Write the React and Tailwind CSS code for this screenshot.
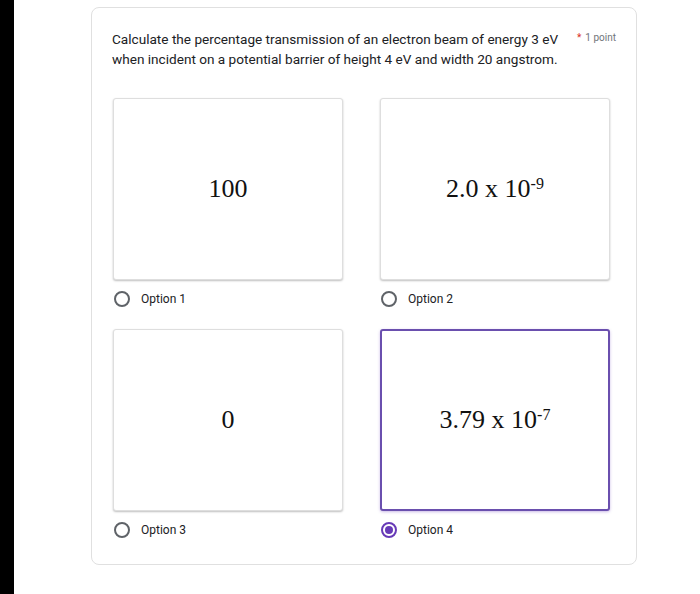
import React from "react";

function Radio({ checked }) {
  return checked ? (
    <span className="flex h-[16px] w-[16px] items-center justify-center rounded-full border-2 border-[#673ab7]">
      <span className="h-[8px] w-[8px] rounded-full bg-[#673ab7]" />
    </span>
  ) : (
    <span className="h-[16px] w-[16px] rounded-full border-2 border-[#5f6368]" />
  );
}

function Option({ label, checked, children }) {
  return (
    <div className="flex flex-col">
      <div
        className={
          checked
            ? "flex h-[182px] w-[230px] items-center justify-center rounded-[3px] border-2 border-[#6a4fae] bg-white shadow-[0_1px_3px_rgba(103,58,183,0.35)]"
            : "flex h-[182px] w-[230px] items-center justify-center rounded-[3px] border border-[#dedede] bg-white shadow-[0_1px_2px_rgba(0,0,0,0.25)]"
        }
      >
        <span className="font-['Liberation_Serif',serif] text-[26px] leading-none text-[#111]">
          {children}
        </span>
      </div>
      <div className="mt-[10px] flex items-center gap-[11px] pl-[1px]">
        <Radio checked={checked} />
        <span className="font-['Roboto',sans-serif] text-[12px] text-[#202124]">
          {label}
        </span>
      </div>
    </div>
  );
}

export default function App() {
  return (
    <div className="flex h-[594px] w-[700px] bg-white">
      <div className="h-full w-[14px] bg-black" />
      <div className="pl-[77px] pt-[7px]">
        <div className="h-[558px] w-[546px] rounded-[8px] border border-[#e0e0e0] pl-[20px] pt-[21px]">
          <div className="flex font-['Roboto',sans-serif] text-[13.6px] leading-[20px] text-[#202124]">
            <p className="w-[465px]">
              Calculate the percentage transmission of an electron beam of energy 3 eV when incident on a potential barrier of height 4 eV and width 20 angstrom.
            </p>
            <div className="flex items-start gap-[4px] text-[10px] leading-[18px]">
              <span className="text-[#d93025]">*</span>
              <span className="text-[#70757a]">1 point</span>
            </div>
          </div>
          <div className="mt-[29px] grid w-[497px] grid-cols-[230px_230px] gap-x-[37px] gap-y-[21px] pl-[1px]">
            <Option label="Option 1">100</Option>
            <Option label="Option 2">
              2.0 x 10<sup className="text-[16px]">-9</sup>
            </Option>
            <Option label="Option 3">0</Option>
            <Option label="Option 4" checked>
              3.79 x 10<sup className="text-[16px]">-7</sup>
            </Option>
          </div>
        </div>
      </div>
    </div>
  );
}
